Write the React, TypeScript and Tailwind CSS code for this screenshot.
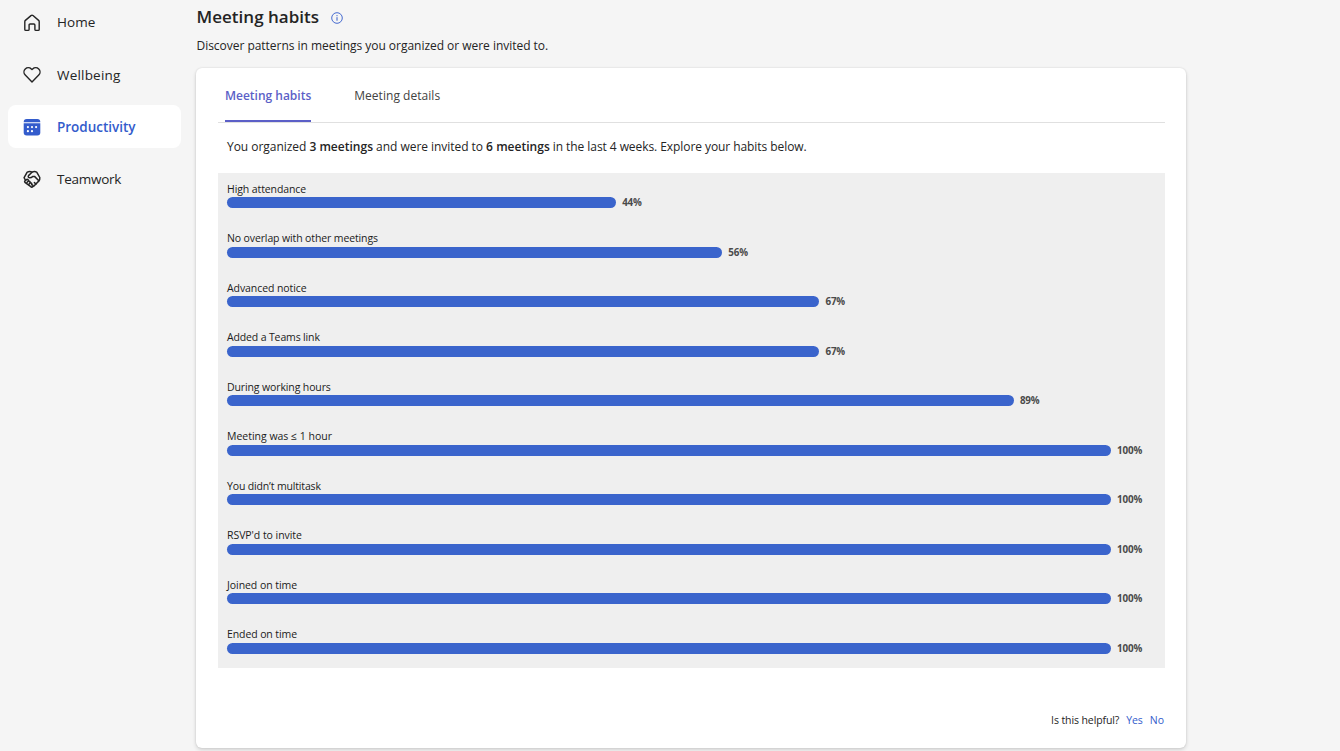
import type { ReactNode } from "react";

const HomeIcon = () => (
  <svg viewBox="0 0 20 20" className="size-5" fill="none" stroke="#242424" strokeWidth="1.4" strokeLinejoin="round">
    <path d="M9 2.6a1.5 1.5 0 0 1 2 0l5.6 4.8c.4.35.6.8.6 1.3v7.700c0 .6-.45 1-1 1h-2.300c-.6 0-1-.4-1-1V12c0-.6-.4-1-1-1H8.100c-.6 0-1 .4-1 1v4.400c0 .6-.4 1-1 1H3.800c-.6 0-1-.4-1-1V8.700c0-.5.2-.95.6-1.300z" />
  </svg>
);

const HeartIcon = () => (
  <svg viewBox="0 0 20 20" className="size-5" fill="none" stroke="#242424" strokeWidth="1.4" strokeLinejoin="round">
    <path d="M10 4.600l-.65-.65a4.300 4.300 0 0 0-6.100 6.100L10 17l6.750-6.950a4.300 4.300 0 0 0-6.100-6.100z" />
  </svg>
);

const CalendarIcon = () => (
  <svg viewBox="0 0 20 20" className="size-5">
    <path d="M1.700 5A3 3 0 0 1 4.700 2h10.600a3 3 0 0 1 3 3v.2H1.700z" fill="#335ccc" />
    <path d="M1.700 6.300h16.600v9.200a3 3 0 0 1-3 3H4.700a3 3 0 0 1-3-3z" fill="#335ccc" />
    <g fill="#fff">
      <circle cx="5.900" cy="10.100" r="1.100" />
      <circle cx="10" cy="10.100" r="1.100" />
      <circle cx="14.100" cy="10.100" r="1.100" />
      <circle cx="5.900" cy="14.200" r="1.100" />
      <circle cx="10" cy="14.200" r="1.100" />
    </g>
  </svg>
);

const HandshakeIcon = () => (
  <svg viewBox="0 0 20 20" className="size-5" fill="none" stroke="#242424" strokeWidth="1.500" strokeLinejoin="round" strokeLinecap="round">
    <path d="M3.300 11L2.100 8.600 5.200 3.100c1.800-.7 3.500-.6 4.800.1 1.400-.7 3.100-.8 4.700-.1l3.100 5.400c.2 1.700-.2 2.700-1.100 3.600l-5 5.200" />
    <path d="M10 3.300L6.500 6.600c-.7 1 0 2.200 1.300 2.200 1.300 0 2.200-.6 3.100-1.400h1.600l4.300 4.300" />
    <path d="M2.800 12.100l1.600-1.500c1.100-.8 2.400.2 1.900 1.500 1.300-.4 2.200.7 1.700 1.800 1.300-.3 2.200.8 1.600 1.900 1.200-.2 1.900.9 1.200 1.800-.7.700-1.400.7-2 .1L2.900 13.300c-.4-.4-.4-.8-.1-1.200z" />
    <path d="M6.200 12.200l-1.300 1.400M8 14l-1.300 1.400M12.400 13.600l1.600 1.400" />
  </svg>
);

type NavItem = { label: string; icon: ReactNode; tracking: string; active?: boolean };

const nav: NavItem[] = [
  { label: "Home", icon: <HomeIcon />, tracking: "tracking-[0.09px]" },
  { label: "Wellbeing", icon: <HeartIcon />, tracking: "tracking-[0.2px]" },
  { label: "Productivity", icon: <CalendarIcon />, tracking: "tracking-[-0.02px]", active: true },
  { label: "Teamwork", icon: <HandshakeIcon />, tracking: "tracking-[-0.25px]" },
];

const habits = [
  { label: "High attendance", value: 44, tracking: "tracking-[-0.1px]" },
  { label: "No overlap with other meetings", value: 56, tracking: "tracking-[-0.12px]" },
  { label: "Advanced notice", value: 67, tracking: "tracking-[-0.08px]" },
  { label: "Added a Teams link", value: 67, tracking: "tracking-[-0.14px]" },
  { label: "During working hours", value: 89, tracking: "tracking-[-0.12px]" },
  { label: "Meeting was ≤ 1 hour", value: 100, tracking: "tracking-[-0.01px]" },
  { label: "You didn’t multitask", value: 100, tracking: "tracking-[-0.15px]" },
  { label: "RSVP'd to invite", value: 100, tracking: "tracking-[-0.05px]" },
  { label: "Joined on time", value: 100, tracking: "tracking-[-0.05px]" },
  { label: "Ended on time", value: 100, tracking: "tracking-[-0.1px]" },
];

function Sidebar() {
  return (
    <nav className="flex w-[196px] shrink-0 flex-col gap-[9.3px] pl-2">
      {nav.map((item) => (
        <a
          key={item.label}
          className={`flex h-[43px] w-[173px] items-center rounded-lg pt-[2px] pl-[14px] text-[13.5px] ${
            item.active ? "bg-white font-semibold text-[#335ccc]" : "text-[#242424]"
          }`}
        >
          {item.icon}
          <span className={`ml-[15px] ${item.tracking}`}>{item.label}</span>
        </a>
      ))}
    </nav>
  );
}

function HabitRow({ label, value, tracking }: { label: string; value: number; tracking: string }) {
  return (
    <div className="h-[49.5px] pt-[7.7px] pl-[9px]">
      <div className={`h-4 text-[10.5px] leading-4 text-[#1b1b1b] ${tracking}`}>{label}</div>
      <div className="flex h-3 items-center gap-[6.3px]">
        <div className="h-[11px] rounded-[5.5px] bg-[#3a64cc]" style={{ width: value * 8.838 }} />
        <span className="pt-[1px] text-[9.8px] leading-3 font-bold tracking-[-0.15px] text-[#4a4a4a]">{value}%</span>
      </div>
    </div>
  );
}

export default function App() {
  return (
    <div className="flex h-[751px] w-[1340px] overflow-hidden bg-[#f5f5f5] font-['Open_Sans','Noto_Sans',sans-serif] text-[#242424]">
      <Sidebar />
      <main className="w-[990px]">
        <header className="h-[68px] pt-1 pl-[0.5px]">
          <div className="flex h-[26px] items-center gap-[12px]">
            <h1 className="text-[17px] leading-[26px] font-semibold tracking-[0.02px]">Meeting habits</h1>
            <svg viewBox="0 0 12 12" className="mt-[1px] size-3" fill="none" stroke="#335ccc">
              <circle cx="6" cy="6" r="5.300" strokeWidth="0.900" />
              <path d="M6 5.200v3.500M6 3.100v1.100" strokeWidth="1" />
            </svg>
          </div>
          <p className="mt-[6px] text-[12px] leading-5 tracking-[-0.03px]">
            Discover patterns in meetings you organized or were invited to.
          </p>
        </header>
        <section className="h-[680px] rounded-md bg-white pr-[21px] pl-[22px] shadow-[0_0_2px_rgba(0,0,0,0.12),0_2px_4px_rgba(0,0,0,0.14)]">
          <div className="flex h-[55px] gap-[43px] border-b border-[#e0e0e0] pl-[7px] text-[12px]">
            <div className="h-[54px] border-b-2 border-[#5b5fc7] pt-[18px] leading-5 font-semibold tracking-[-0.01px] text-[#5b5fc7]">
              Meeting habits
            </div>
            <div className="pt-[18px] leading-5 tracking-[0.04px] text-[#424242]">Meeting details</div>
          </div>
          <p className="h-[50px] pt-[14px] pl-[9px] text-[12px] leading-5 tracking-[-0.04px]">
            You organized <b className="font-semibold tracking-[0.02px]">3 meetings</b> and were invited to{" "}
            <b className="font-semibold tracking-[0.02px]">6 meetings</b>
            <span className="tracking-[-0.07px]"> in the last 4 weeks. Explore your habits below.</span>
          </p>
          <div className="h-[495px] bg-[#efefef]">
            {habits.map((habit) => (
              <HabitRow key={habit.label} {...habit} />
            ))}
          </div>
          <div className="mt-[42px] flex justify-end gap-[7px] pr-[1px] text-[10.5px] leading-5">
            <span className="tracking-[-0.1px]">Is this helpful?</span>
            <a className="tracking-[-0.1px] text-[#335ccc]">Yes</a>
            <a className="text-[#335ccc]">No</a>
          </div>
        </section>
      </main>
    </div>
  );
}
